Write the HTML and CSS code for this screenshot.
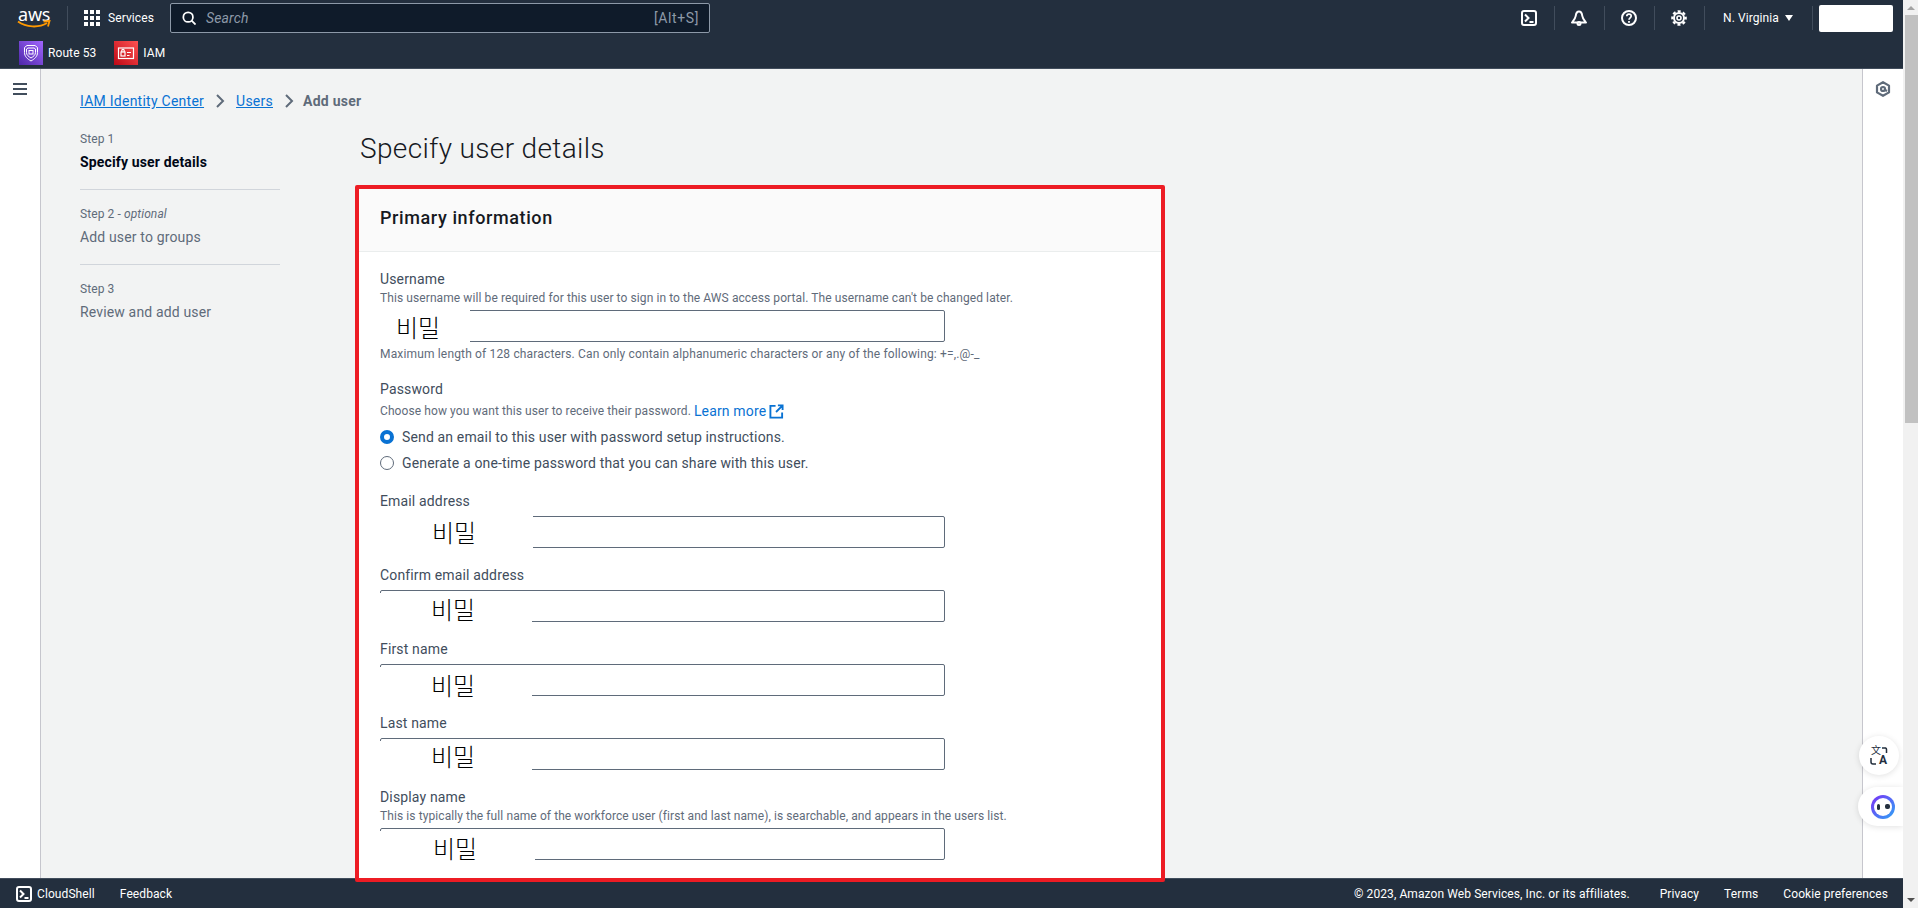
FILE: index.html
```html
<!DOCTYPE html>
<html lang="en">
<head>
    <meta charset="UTF-8">
    <meta name="viewport" content="width=device-width, initial-scale=1.0">
    <title>Add user - IAM Identity Center</title>
    <link rel="stylesheet" href="styles.css">
</head>
<body>
<div class="window">
    <div class="app">
        <!-- Top navigation -->
        <header class="topbar">
            <div class="toprow">
                <a class="aws-logo">
                    <span class="aws-word">aws</span>
                    <svg class="aws-smile" viewBox="0 0 34 9" width="34" height="9"><path d="M1 1.5C9 7.5 22 8 30 3" fill="none" stroke="#ff9900" stroke-width="2"/><path d="M26.5 1.5L32.5 1L31 6.5" fill="none" stroke="#ff9900" stroke-width="1.8"/></svg>
                </a>
                <span class="nav-div nav-div-logo"></span>
                <svg class="grid-icon" viewBox="0 0 16 16" width="16" height="16" fill="#fff">
                    <rect x="0" y="0" width="4" height="4"/><rect x="6" y="0" width="4" height="4"/><rect x="12" y="0" width="4" height="4"/>
                    <rect x="0" y="6" width="4" height="4"/><rect x="6" y="6" width="4" height="4"/><rect x="12" y="6" width="4" height="4"/>
                    <rect x="0" y="12" width="4" height="4"/><rect x="6" y="12" width="4" height="4"/><rect x="12" y="12" width="4" height="4"/>
                </svg>
                <span class="services">Services</span>
                <div class="search">
                    <svg viewBox="0 0 16 16" width="14" height="14" fill="none" stroke="#fff" stroke-width="2"><circle cx="7" cy="7" r="5.5"/><path d="M11 11l4.5 4.5"/></svg>
                    <span class="search-text">Search</span>
                    <span class="search-key">[Alt+S]</span>
                </div>
                <div class="top-icons">
                    <svg class="top-icon" viewBox="0 0 16 16" width="16" height="16" fill="none" stroke="#fff" stroke-width="2"><rect x="1" y="1" width="14" height="14" rx="2"/><path d="M4 4.500L7.500 8L4 11.500M8.500 12H12.500"/></svg>
                    <span class="nav-div"></span>
                    <svg class="top-icon" viewBox="0 0 16 16" width="16" height="16" fill="none" stroke="#fff" stroke-width="2"><path d="M8 1.500C5.800 1.500 5 3.500 4.700 6C4.400 8.500 3 10 1 12.500H15C13 10 11.600 8.500 11.300 6C11 3.500 10.200 1.500 8 1.500Z" stroke-linejoin="round"/><circle cx="8" cy="13.500" r="1.500"/></svg>
                    <span class="nav-div"></span>
                    <svg class="top-icon" viewBox="0 0 16 16" width="16" height="16" fill="none" stroke="#fff" stroke-width="2"><circle cx="8" cy="8" r="7"/><path d="M5.800 6.200C5.800 3.400 10.200 3.400 10.200 6C10.200 7.800 8 7.800 8 9.800" stroke-width="1.700"/><rect x="7.100" y="11" width="1.800" height="1.800" fill="#fff" stroke="none"/></svg>
                    <span class="nav-div"></span>
                    <svg class="top-icon" viewBox="0 0 16 16" width="16" height="16" fill="none" stroke="#fff"><circle cx="8" cy="8" r="5" stroke-width="2"/><circle cx="8" cy="8" r="2" stroke-width="1.600"/><circle cx="8" cy="8" r="6.700" stroke-width="2.200" stroke-dasharray="3 2.260" stroke-dashoffset="1.500"/></svg>
                    <span class="nav-div"></span>
                    <span class="region">N. Virginia</span>
                    <span class="caret"></span>
                    <span class="nav-div nav-div-end"></span>
                    <span class="account"></span>
                </div>
            </div>
            <div class="favorites">
                <a class="fav">
                    <svg class="fav-icon route53" viewBox="0 0 24 24" width="24" height="24" fill="none" stroke="#fff" stroke-width="1"><path d="M8 4.500h8l2.500 2v5c0 4-3 6.500-6.500 8.500C8.500 18 5.500 15.500 5.500 11.500v-5z"/><path d="M9 7h6l1.500 1v3.500c0 2.500-2 4-4.500 5.500C9.500 15.500 7.500 14 7.500 11.500V8z"/><rect x="10" y="9.500" width="4" height="3.500"/></svg>
                    <span>Route 53</span>
                </a>
                <a class="fav">
                    <svg class="fav-icon iam" viewBox="0 0 24 24" width="24" height="24" fill="none" stroke="#fff" stroke-width="1.200"><rect x="4.500" y="7" width="15" height="10.500"/><rect x="7" y="11" width="4" height="4"/><path d="M7.800 11V9.500a1.200 1.200 0 0 1 2.400 0V11M13 11.500h4M13 14.500h2.500"/></svg>
                    <span>IAM</span>
                </a>
            </div>
        </header>

        <div class="main">
            <aside class="rail rail-left">
                <div class="hamburger"><span></span><span></span><span></span></div>
            </aside>

            <div class="content">
                <!-- Breadcrumbs -->
                <nav class="crumbs">
                    <a class="link">IAM Identity Center</a>
                    <svg class="crumb-sep" viewBox="0 0 10 16" width="10" height="16" fill="none" stroke="#5f6b7a" stroke-width="2"><path d="M2 2l6 6-6 6"/></svg>
                    <a class="link">Users</a>
                    <svg class="crumb-sep" viewBox="0 0 10 16" width="10" height="16" fill="none" stroke="#5f6b7a" stroke-width="2"><path d="M2 2l6 6-6 6"/></svg>
                    <span class="crumb-now">Add user</span>
                </nav>

                <div class="wizard">
                    <!-- Steps -->
                    <ol class="steps">
                        <li class="step">
                            <small>Step 1</small>
                            <span class="step-name step-current">Specify user details</span>
                        </li>
                        <li class="step">
                            <small>Step 2 - <i>optional</i></small>
                            <span class="step-name">Add user to groups</span>
                        </li>
                        <li class="step">
                            <small>Step 3</small>
                            <span class="step-name">Review and add user</span>
                        </li>
                    </ol>

                    <div class="form-col">
                        <h1 class="page-title">Specify user details</h1>

                        <section class="panel">
                            <h2 class="panel-head">Primary information</h2>
                            <div class="panel-body">
                                <div class="field">
                                    <label>Username</label>
                                    <p class="desc">This username will be required for this user to sign in to the AWS access portal. The username can't be changed later.</p>
                                    <div class="input">
                                        <span class="redact redact-user">비밀</span>
                                    </div>
                                    <p class="desc hint">Maximum length of 128 characters. Can only contain alphanumeric characters or any of the following: +=,.@-_</p>
                                </div>

                                <div class="field field-password">
                                    <label>Password</label>
                                    <p class="desc desc-link">Choose how you want this user to receive their password. <a class="link-plain">Learn more</a>
                                        <svg viewBox="0 0 16 16" width="15" height="15" fill="none" stroke="#0972d3" stroke-width="2"><path d="M7 2H1.500V14.500H14V9M9.500 1.500H14.500V6.500M14 2L7.500 8.500"/></svg>
                                    </p>
                                    <div class="radio-row"><span class="radio radio-on"></span>Send an email to this user with password setup instructions.</div>
                                    <div class="radio-row"><span class="radio"></span>Generate a one-time password that you can share with this user.</div>
                                </div>

                                <div class="field field-plain">
                                    <label>Email address</label>
                                    <div class="input">
                                        <span class="redact redact-email">비밀</span>
                                    </div>
                                </div>

                                <div class="field field-plain">
                                    <label>Confirm email address</label>
                                    <div class="input">
                                        <span class="redact redact-low redact-confirm">비밀</span>
                                    </div>
                                </div>

                                <div class="field field-plain">
                                    <label>First name</label>
                                    <div class="input">
                                        <span class="redact redact-low redact-first">비밀</span>
                                    </div>
                                </div>

                                <div class="field field-plain">
                                    <label>Last name</label>
                                    <div class="input">
                                        <span class="redact redact-low redact-last">비밀</span>
                                    </div>
                                </div>

                                <div class="field">
                                    <label>Display name</label>
                                    <p class="desc">This is typically the full name of the workforce user (first and last name), is searchable, and appears in the users list.</p>
                                    <div class="input">
                                        <span class="redact redact-low redact-display">비밀</span>
                                    </div>
                                </div>
                            </div>
                        </section>
                    </div>
                </div>
            </div>

            <aside class="rail rail-right">
                <svg viewBox="0 0 16 16" width="16" height="16" fill="none" stroke="#5f6b7a" stroke-width="2.200"><path d="M8 1.200L14 4.600V11.400L8 14.800L2 11.400V4.600Z" stroke-linejoin="round"/><circle cx="8" cy="8" r="2"/><path d="M9 8.500L12 10"/></svg>
            </aside>

            <!-- Browser extension buttons -->
            <div class="float-btn float-translate">
                <span class="tr-zh">文</span><span class="tr-a">A</span>
                <svg class="tr-marks" viewBox="0 0 18 18" width="18" height="18" fill="none" stroke="#232f3e" stroke-width="1.500"><path d="M12 1h3.500a1.500 1.500 0 0 1 1 1.500V6M1 11v4a2 2 0 0 0 2 2h3"/></svg>
            </div>
            <div class="float-btn float-bot">
                <span class="bot-ring"><span class="bot-face"><i></i><i class="bot-eye"></i></span></span>
            </div>
        </div>

        <!-- Console footer -->
        <footer class="footer">
            <svg viewBox="0 0 16 16" width="16" height="16" fill="none" stroke="#fff" stroke-width="2"><rect x="1" y="1" width="14" height="14" rx="2"/><path d="M4 4.500L7.500 8L4 11.500M8.500 12H12.500"/></svg>
            <span class="foot-shell">CloudShell</span>
            <span class="foot-feedback">Feedback</span>
            <span class="foot-copy">© 2023, Amazon Web Services, Inc. or its affiliates.</span>
            <span class="foot-link foot-privacy">Privacy</span>
            <span class="foot-link">Terms</span>
            <span class="foot-link">Cookie preferences</span>
        </footer>
    </div>

    <div class="scrollbar">
        <span class="arrow-up"></span>
        <span class="thumb"></span>
        <span class="arrow-down"></span>
    </div>
</div>
</body>
</html>
```

FILE: styles.css
```css
* {
    box-sizing: border-box;
}

body {
    margin: 0;
    font-family: Roboto, "Noto Sans", sans-serif;
    font-size: 14px;
    letter-spacing: 0.15px;
    color: #000716;
    background: #f2f3f3;
}

/* Page frame */
.window {
    display: flex;
    height: 908px;
    overflow: hidden;
}

.app {
    flex: 1;
    min-width: 0;
    display: flex;
    flex-direction: column;
}

/* Top navigation */
.topbar {
    height: 69px;
    flex: none;
    background: #232f3e;
    border-bottom: 1px solid #414d5c;
    color: #fff;
}

.toprow {
    height: 36px;
    display: flex;
    align-items: center;
    padding-left: 18px;
}

.aws-logo {
    position: relative;
    width: 32px;
    height: 22px;
    display: block;
}

.aws-word {
    display: block;
    font-family: "Noto Sans", sans-serif;
    font-size: 18px;
    line-height: 15px;
    letter-spacing: -0.2px;
    color: #fff;
}

.aws-smile {
    position: absolute;
    left: -1px;
    top: 13px;
}

.nav-div {
    width: 1px;
    height: 24px;
    background: #414d5c;
}

.nav-div-logo {
    margin: 0 16px 0 17px;
}

.services {
    margin-left: 8px;
    font-size: 12px;
    letter-spacing: 0.09px;
    width: 62px;
}

.search {
    width: 540px;
    height: 30px;
    display: flex;
    align-items: center;
    padding: 0 10px 0 11px;
    background: #0f1b2a;
    border: 1px solid #8d99a8;
    border-radius: 2px;
}

.search-text {
    margin-left: 10px;
    flex: 1;
    font-size: 14px;
    font-style: italic;
    color: #8d99a8;
}

.search-key {
    font-size: 14px;
    letter-spacing: 0.6px;
    color: #8d99a8;
}

.top-icons {
    margin-left: auto;
    display: flex;
    align-items: center;
    padding-right: 10px;
}

.top-icon {
    margin: 0 17px 0 16px;
}

.region {
    margin-left: 18px;
    width: 56px;
    white-space: nowrap;
    font-size: 12px;
    letter-spacing: 0.09px;
}

.caret {
    margin: 0 19px 0 6px;
    border-left: 4px solid transparent;
    border-right: 4px solid transparent;
    border-top: 6px solid #fff;
}

.nav-div-end {
    margin-right: 6px;
}

.account {
    width: 74px;
    height: 27px;
    background: #fff;
    border-radius: 2px;
}

.favorites {
    height: 33px;
    display: flex;
    align-items: center;
    padding: 0 0 0 19px;
    gap: 18px;
}

.fav {
    display: flex;
    align-items: center;
    gap: 5px;
    font-size: 12px;
    letter-spacing: 0.09px;
    color: #fff;
}

.route53 {
    background: linear-gradient(45deg, #4d27a8, #a166ff);
}

.iam {
    background: linear-gradient(45deg, #bd0816, #ff5252);
}

/* Main area */
.main {
    flex: 1;
    min-height: 0;
    display: flex;
    position: relative;
}

.rail {
    flex: none;
    width: 41px;
    background: #fff;
}

.rail-left {
    border-right: 1px solid #c6c6cd;
    padding: 14px 0 0 13px;
}

.hamburger {
    width: 14px;
    display: flex;
    flex-direction: column;
    gap: 3px;
}

.hamburger span {
    height: 2px;
    background: #414d5c;
}

.rail-right {
    border-left: 1px solid #c6c6cd;
    padding: 12px 0 0 12px;
}

.content {
    flex: 1;
    min-width: 0;
    padding: 21px 0 0 39px;
}

.crumbs {
    display: flex;
    align-items: center;
    gap: 11px;
    height: 22px;
    letter-spacing: 0.25px;
}

.link {
    color: #0972d3;
    text-decoration: underline;
}

.crumb-now {
    margin-left: -2px;
    color: #5f6b7a;
    font-weight: 700;
}

.wizard {
    display: flex;
    margin-top: 18px;
}

/* Steps */
.steps {
    list-style: none;
    margin: 0;
    padding: 1px 0 0;
    width: 200px;
    flex: none;
}

.step {
    height: 59px;
    border-bottom: 1px solid #d1d5db;
    margin-bottom: 16px;
}

.step:last-child {
    border-bottom: none;
}

.step small {
    display: block;
    font-size: 12px;
    letter-spacing: 0.09px;
    line-height: 16px;
    color: #5f6b7a;
    margin-bottom: 5px;
}

.step-name {
    display: block;
    line-height: 20px;
    color: #5f6b7a;
}

.step-current {
    color: #000716;
    font-weight: 700;
}

/* Form column */
.form-col {
    margin-left: 75px;
    width: 810px;
}

.page-title {
    margin: 1px 0 18px 5px;
    font-size: 28px;
    font-weight: 300;
    line-height: 36px;
    letter-spacing: 0.35px;
    color: #16191f;
}

.panel {
    position: relative;
    z-index: 2;
    width: 810px;
    background: #fff;
    border: 4px solid #ed1c24;
    border-radius: 2px;
}

.panel-head {
    margin: 0;
    height: 63px;
    padding: 0 21px 5px;
    display: flex;
    align-items: center;
    font-size: 18px;
    font-weight: 500;
    letter-spacing: 0.6px;
    color: #16191f;
    background: #fafafa;
    border-bottom: 1px solid #eaeded;
}

.panel-body {
    padding: 17px 21px 18px;
}

.field {
    margin-bottom: 17px;
}

.field:last-child {
    margin-bottom: 0;
}

.field-password {
    margin-bottom: 15px;
}

.field label {
    display: block;
    line-height: 20px;
    font-size: 14px;
    color: #414d5c;
}

.field-plain label {
    margin-bottom: 5px;
}

.desc {
    margin: 1px 0 4px;
    font-size: 12px;
    letter-spacing: 0.09px;
    line-height: 16px;
    color: #5f6b7a;
}

.hint {
    margin: 4px 0 0;
    letter-spacing: 0.16px;
}

.desc-link {
    margin: 4px 0 5px;
    display: flex;
    align-items: center;
    gap: 3px;
}

.link-plain {
    font-size: 14px;
    letter-spacing: 0.15px;
    color: #0972d3;
}

.radio-row {
    height: 26px;
    display: flex;
    align-items: center;
    gap: 8px;
    color: #414d5c;
}

.radio {
    width: 14px;
    height: 14px;
    border: 1px solid #5f6b7a;
    border-radius: 50%;
    background: #fff;
}

.radio-on {
    border: 4px solid #0972d3;
}

.input {
    position: relative;
    width: 565px;
    height: 32px;
    border: 1px solid #5f6b7a;
    border-radius: 2px;
    background: #fff;
}

/* White patches with 비밀 typed over the hidden values */
.redact {
    position: absolute;
    left: -1px;
    top: -1px;
    height: 33px;
    background: #fff;
    font-family: "Noto Sans CJK KR", sans-serif;
    font-size: 24px;
    font-weight: 300;
    letter-spacing: 0;
    line-height: 34px;
    color: #000;
}

.redact-user {
    width: 90px;
    padding-left: 16px;
}

.redact-email {
    width: 153px;
    padding-left: 52px;
    line-height: 32px;
}

.redact-low {
    top: 2px;
    height: 30px;
    width: 152px;
    padding-left: 51px;
}

.redact-confirm {
    line-height: 32px;
}

.redact-first {
    line-height: 35px;
}

.redact-last {
    line-height: 30px;
}

.redact-display {
    width: 155px;
    padding-left: 53px;
    line-height: 34px;
}

/* Floating extension buttons */
.float-btn {
    position: absolute;
    background: #fff;
    box-shadow: 0 1px 6px rgba(0, 0, 0, 0.12);
}

.float-translate {
    right: 4px;
    top: 667px;
    width: 40px;
    height: 39px;
    border-radius: 50%;
}

.tr-zh {
    position: absolute;
    left: 12px;
    top: 8px;
    font-family: "Noto Sans CJK SC", sans-serif;
    font-size: 10px;
    line-height: 12px;
    color: #232f3e;
}

.tr-a {
    position: absolute;
    left: 20px;
    top: 17px;
    font-size: 12px;
    font-weight: 700;
    line-height: 14px;
    color: #232f3e;
}

.tr-marks {
    position: absolute;
    left: 11px;
    top: 11px;
}

.float-bot {
    right: 0;
    top: 718px;
    width: 45px;
    height: 39px;
    border-radius: 20px 0 0 20px;
    display: flex;
    align-items: center;
    padding-left: 13px;
}

.bot-ring {
    width: 24px;
    height: 24px;
    border-radius: 50%;
    padding: 3px;
    background: linear-gradient(135deg, #7b2ff7, #2ea6f5);
}

.bot-face {
    height: 18px;
    display: flex;
    align-items: center;
    justify-content: center;
    gap: 5px;
    background: #fff;
    border-radius: 50%;
}

.bot-face i {
    width: 3px;
    height: 6px;
    border-radius: 2px;
    background: #232f3e;
}

.bot-face .bot-eye {
    width: 5px;
    height: 5px;
}

/* Console footer */
.footer {
    height: 30px;
    flex: none;
    display: flex;
    align-items: center;
    padding: 0 15px 0 16px;
    background: #232f3e;
    border-top: 1px solid #414d5c;
    color: #fff;
    font-size: 12px;
    letter-spacing: 0.09px;
}

.foot-shell {
    margin-left: 5px;
}

.foot-feedback {
    margin-left: 25px;
}

.foot-copy {
    margin-left: auto;
}

.foot-link {
    margin-left: 25px;
}

.foot-privacy {
    margin-left: 30px;
}

/* Browser scrollbar */
.scrollbar {
    width: 15px;
    flex: none;
    position: relative;
    background: #f1f1f1;
}

.thumb {
    display: block;
    margin: 15px 0 0 2px;
    height: 408px;
    background: #c1c1c1;
}

.arrow-up,
.arrow-down {
    position: absolute;
    left: 4px;
    border-left: 4px solid transparent;
    border-right: 4px solid transparent;
}

.arrow-up {
    top: 6px;
    border-bottom: 4px solid #a3a3a3;
}

.arrow-down {
    bottom: 6px;
    border-top: 4px solid #505050;
}
```
